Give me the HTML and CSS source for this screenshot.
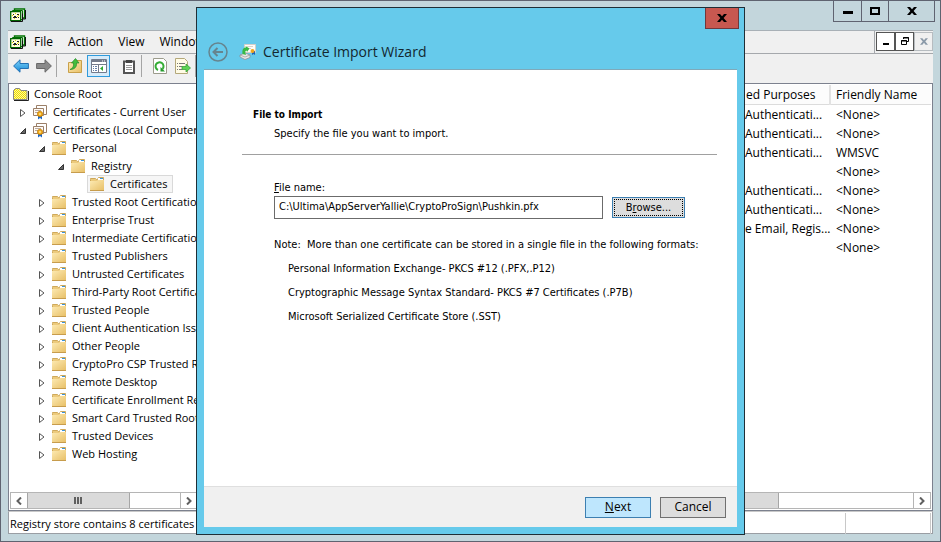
FILE: index.html
```html
<!DOCTYPE html>
<html lang="en">
<head>
<meta charset="utf-8">
<title>Certificate Import Wizard</title>
<link rel="stylesheet" href="styles.css">
</head>
<body>
<svg class="defs" aria-hidden="true">
  <defs>
    <linearGradient id="fold" x1="0" y1="0" x2="1" y2="1"><stop offset="0" stop-color="#fdebb4"/><stop offset="1" stop-color="#e8c068"/></linearGradient>
    <linearGradient id="blue" x1="0" y1="0" x2="0" y2="1"><stop offset="0" stop-color="#7cd0f8"/><stop offset="1" stop-color="#168ad8"/></linearGradient>
    <pattern id="hatch" width="2" height="2" patternUnits="userSpaceOnUse"><rect width="2" height="2" fill="#fff89a"/><rect width="1" height="1" fill="#eedd00"/><rect x="1" y="1" width="1" height="1" fill="#eedd00"/></pattern>
    <symbol id="folder" viewBox="0 0 16 14">
      <path d="M1.500 2.500V1.500h5l1 1h1l1-2h5v12h-13z" fill="#ecca7c" stroke="#cfa95a"/>
      <path d="M9 1h5v2H9z" fill="#fff"/><path d="M11 1h3v1h-3z" fill="#3b94d9"/>
      <path d="M1 4h7l1-1h6v10H1z" fill="url(#fold)"/>
      <path d="M1 13.500h14" stroke="#c79c4c"/>
    </symbol>
    <symbol id="cert" viewBox="0 0 16 16">
      <path d="M4.500 1.500h10v9h-10z" fill="#fff" stroke="#9b7f68"/>
      <path d="M1.500 4.500h10v7h-10z" fill="#fffaf4" stroke="#9b7f68"/>
      <path d="M3 6.500h6M3 8.500h3" stroke="#b9a9a0"/>
      <path d="M6 11v4.500l2-1.500 2 1.500V11z" fill="#1d68c9"/>
      <circle cx="8" cy="10" r="2.700" fill="#f0a818" stroke="#b87500" stroke-width=".6"/><circle cx="8" cy="10" r="1" fill="#ffe38a"/>
    </symbol>
    <symbol id="mmc" viewBox="0 0 16 14">
      <path d="M4.500 1h10v9h-10z" fill="#fff" stroke="#007000" stroke-width="1.400"/>
      <path d="M15.500 2v9h-3" fill="none" stroke="#111"/>
      <path d="M2.500 2.500h10v9h-10z" fill="#fff" stroke="#007000" stroke-width="1"/>
      <path d="M.7 3.700h10v9h-10z" fill="#fffde0" stroke="#006400" stroke-width="1.300"/>
      <path d="M3 6h1v1H3zm4 0h2v1H7zM3 9h1V8h2v1h1v1H3zm5 0h1v1H8z" fill="#222"/>
      <path d="M5 5h1v1H5zM2 7h1v1H2zM7 8h1v1H7zM8 7h1v1H8zM4 10h1v1H4z" fill="#e8d800"/>
      <path d="M1 13.500h11.500v-8" fill="none" stroke="#111"/>
    </symbol>
    <symbol id="closed" viewBox="0 0 8 10"><path d="M1.500 1.500v7L6 5z" fill="#fff" stroke="#555"/></symbol>
    <symbol id="open" viewBox="0 0 8 10"><path d="M6.500 2.500v5h-5z" fill="#666" stroke="#333"/></symbol>
    <symbol id="cross" viewBox="0 0 10 8"><path d="M0 0h3l2 2.300L7 0h3L6.600 4 10 8H7L5 5.700 3 8H0l3.400-4z" fill="currentColor"/></symbol>
    <symbol id="arrow" viewBox="0 0 16 14"><path d="M.6 7 7 .8v3.700h8.400v5H7v3.700z"/></symbol>
  </defs>
</svg>

<div class="window">
  <header class="titlebar">
    <svg class="i16"><use href="#mmc"/></svg>
    <div class="caption">
      <button aria-label="Minimize"><svg width="10" height="8"><path d="M0 4h10v3H0z"/></svg></button>
      <button aria-label="Maximize"><svg width="10" height="8"><path d="M1 1h8v6H1z" fill="none" stroke="#000" stroke-width="2"/></svg></button>
      <button class="wide" aria-label="Close"><svg width="10" height="8"><use href="#cross"/></svg></button>
    </div>
  </header>

  <main class="client">
    <nav class="menubar">
      <svg class="i16"><use href="#mmc"/></svg>
      <a href="#">File</a><a href="#">Action</a><a href="#">View</a><a href="#">Window</a>
      <div class="child-controls">
        <button aria-label="Minimize child"><svg width="8" height="8"><path d="M1 6h6v2H1z"/></svg></button>
        <button aria-label="Restore child"><svg width="8" height="8" fill="none" stroke="#000"><path d="M2.500 2V.5h5v4H6M2 1h6M.5 3.500h5v4h-5zM0 4h6"/></svg></button>
        <button class="off" aria-label="Close child" disabled><svg width="8" height="7"><use href="#cross"/></svg></button>
      </div>
    </nav>

    <div class="toolbar">
      <button aria-label="Back"><svg width="16" height="14" fill="url(#blue)" stroke="#2271b4"><use href="#arrow"/></svg></button>
      <button aria-label="Forward"><svg class="flip" width="16" height="14" fill="#8a8a8a" stroke="#686868"><use href="#arrow"/></svg></button>
      <i></i>
      <button aria-label="Up one level"><svg width="16" height="16"><path d="M1.500 4.500h6l1-2h6v12h-13z" fill="url(#fold)" stroke="#c9a04a"/><path d="M3 11.500C6 10.500 7 8 6.500 5H4.500l4-4.500L12 5H9.500c.5 4-2 6.500-6.500 6.500z" fill="#43bd3c" stroke="#23892a" stroke-width=".7"/></svg></button>
      <button class="on" aria-label="Show console tree"><svg width="16" height="14"><path d="M.5.5h15v13H.5z" fill="#fff" stroke="#737b8b"/><path d="M1 2h14" stroke="#737b8b" stroke-width="2"/><path d="M1 5.500h14M7.500 6v7" stroke="#737b8b"/><path d="M11 2h1m1 0h1" stroke="#fff"/><path d="M2 7.500h1m1 0h2M2 9.500h1m1 0h2M2 11.500h1m1 0h2" stroke="#6681a9"/><path d="M12 7v5L9 9.500z" fill="#30a832"/></svg></button>
      <button aria-label="Paste"><svg width="12" height="15"><path d="M1 2.500h10v11.500H1z" fill="#fff" stroke="#555" stroke-width="2"/><path d="M3 1h6v3H3z" fill="#444"/><path d="M3 6.500h6M3 8.500h6M3 10.500h6" stroke="#999"/></svg></button>
      <i></i>
      <button aria-label="Refresh"><svg width="14" height="16"><path d="M.5.500h10l3 3v12H.5z" fill="#fff" stroke="#9c9c8c"/><path d="M5 12A4 4 0 1 1 9.500 11" fill="none" stroke="#35ad35" stroke-width="2"/><path d="M7.500 9v4.500H12z" fill="#239a2b"/></svg></button>
      <button aria-label="Export list"><svg width="16" height="16"><path d="M.5.500h9l3 3v12H.5z" fill="#fffbe5" stroke="#b4a87a"/><path d="M2 5.500h1m1 0h6M2 8.500h1m1 0h3M2 11.500h1m1 0h3" stroke="#777"/><path d="M7 8.500h4V6l4.500 4L11 14v-2.500H7z" fill="#5ed354" stroke="#2a9b2d" stroke-width=".7"/></svg></button>
      <i></i>
    </div>

    <div class="panes">
      <section class="tree-pane">
        <ul class="tree">
          <li class="root"><svg class="i16" viewBox="0 0 16 14"><path d="M.5 3.500l2-2h4l1.500 2h6v9H.5z" fill="url(#hatch)" stroke="#888"/><path d="M1 13.500h14.500V4" fill="none" stroke="#222"/></svg><span>Console Root</span></li>
          <li class="l1"><svg class="tw"><use href="#closed"/></svg><svg class="i16"><use href="#cert"/></svg><span>Certificates - Current User</span></li>
          <li class="l1"><svg class="tw"><use href="#open"/></svg><svg class="i16"><use href="#cert"/></svg><span>Certificates (Local Computer)</span></li>
          <li class="l2"><svg class="tw"><use href="#open"/></svg><svg class="i16"><use href="#folder"/></svg><span>Personal</span></li>
          <li class="l3"><svg class="tw"><use href="#open"/></svg><svg class="i16"><use href="#folder"/></svg><span>Registry</span></li>
          <li class="l4"><div class="selected"><svg class="i16"><use href="#folder"/></svg><span>Certificates</span></div></li>
          <li class="l2"><svg class="tw"><use href="#closed"/></svg><svg class="i16"><use href="#folder"/></svg><span>Trusted Root Certification Authorities</span></li>
          <li class="l2"><svg class="tw"><use href="#closed"/></svg><svg class="i16"><use href="#folder"/></svg><span>Enterprise Trust</span></li>
          <li class="l2"><svg class="tw"><use href="#closed"/></svg><svg class="i16"><use href="#folder"/></svg><span>Intermediate Certification Authorities</span></li>
          <li class="l2"><svg class="tw"><use href="#closed"/></svg><svg class="i16"><use href="#folder"/></svg><span>Trusted Publishers</span></li>
          <li class="l2"><svg class="tw"><use href="#closed"/></svg><svg class="i16"><use href="#folder"/></svg><span>Untrusted Certificates</span></li>
          <li class="l2"><svg class="tw"><use href="#closed"/></svg><svg class="i16"><use href="#folder"/></svg><span>Third-Party Root Certification Authorities</span></li>
          <li class="l2"><svg class="tw"><use href="#closed"/></svg><svg class="i16"><use href="#folder"/></svg><span>Trusted People</span></li>
          <li class="l2"><svg class="tw"><use href="#closed"/></svg><svg class="i16"><use href="#folder"/></svg><span>Client Authentication Issuers</span></li>
          <li class="l2"><svg class="tw"><use href="#closed"/></svg><svg class="i16"><use href="#folder"/></svg><span>Other People</span></li>
          <li class="l2"><svg class="tw"><use href="#closed"/></svg><svg class="i16"><use href="#folder"/></svg><span>CryptoPro CSP Trusted Roots</span></li>
          <li class="l2"><svg class="tw"><use href="#closed"/></svg><svg class="i16"><use href="#folder"/></svg><span>Remote Desktop</span></li>
          <li class="l2"><svg class="tw"><use href="#closed"/></svg><svg class="i16"><use href="#folder"/></svg><span>Certificate Enrollment Requests</span></li>
          <li class="l2"><svg class="tw"><use href="#closed"/></svg><svg class="i16"><use href="#folder"/></svg><span>Smart Card Trusted Roots</span></li>
          <li class="l2"><svg class="tw"><use href="#closed"/></svg><svg class="i16"><use href="#folder"/></svg><span>Trusted Devices</span></li>
          <li class="l2"><svg class="tw"><use href="#closed"/></svg><svg class="i16"><use href="#folder"/></svg><span>Web Hosting</span></li>
        </ul>
        <div class="scroll">
          <button aria-label="Scroll left"><svg width="6" height="8"><path d="M5 .5 1.500 4 5 7.500"/></svg></button>
          <div class="track"><div class="thumb"><b></b><b></b><b></b></div></div>
          <button aria-label="Scroll right"><svg width="6" height="8"><path d="M1 .5 4.500 4 1 7.500"/></svg></button>
        </div>
      </section>
      <section class="list-pane">
        <table>
          <colgroup><col><col class="c-purpose"><col class="c-name"></colgroup>
          <thead><tr><th></th><th>ed Purposes</th><th>Friendly Name</th></tr></thead>
          <tbody>
            <tr><td></td><td>Authenticati...</td><td>&lt;None&gt;</td></tr>
            <tr><td></td><td>Authenticati...</td><td>&lt;None&gt;</td></tr>
            <tr><td></td><td>Authenticati...</td><td>WMSVC</td></tr>
            <tr><td></td><td></td><td>&lt;None&gt;</td></tr>
            <tr><td></td><td>Authenticati...</td><td>&lt;None&gt;</td></tr>
            <tr><td></td><td>Authenticati...</td><td>&lt;None&gt;</td></tr>
            <tr><td></td><td>e Email, Regis...</td><td>&lt;None&gt;</td></tr>
            <tr><td></td><td></td><td>&lt;None&gt;</td></tr>
          </tbody>
        </table>
        <div class="scroll">
          <div class="track"><div class="thumb long"></div></div>
          <button aria-label="Scroll list right"><svg width="6" height="8"><path d="M1 .5 4.500 4 1 7.500"/></svg></button>
        </div>
      </section>
    </div>

    <footer class="status"><span>Registry store contains 8 certificates</span><i></i><i></i></footer>
  </main>
</div>

<div class="overlay">
  <form class="dialog">
    <header class="dialog-head">
      <button type="button" class="close" aria-label="Close wizard"><svg width="10" height="8"><use href="#cross"/></svg></button>
      <div class="dialog-title">
        <button type="button" class="back" aria-label="Previous page"><svg width="20" height="20" fill="none" stroke="#66858f" stroke-width="2"><circle cx="10" cy="10" r="9" stroke-width="1.500"/><path d="M5.500 10H15M9.500 6l-4 4 4 4"/></svg></button>
        <svg width="18" height="18"><path d="M5.500 1.500h11v8h-11z" fill="#fffdf8" stroke="#d5cfc9"/><path d="M8 3.500h6M9 5.500h3" stroke="#d8d2cc"/><path d="M13 8v4l1.500-1 1.500 1V8z" fill="#1c62bc"/><circle cx="13.500" cy="8" r="2" fill="#f2a71b"/><path d="M1 12l5-2 5 2v2.500L6 16.500 1 14z" fill="#e8e8e8" stroke="#8c8c8c" stroke-width=".7"/><path d="M1 12l5 2 5-2" fill="none" stroke="#999" stroke-width=".7"/><path d="M3.500 11C3 7 4 4.500 7 4.500L6.500 3l4 2.500L8 9 7.500 7.500C6 8 6 9.500 7 12z" fill="#38ba45"/></svg>
        <h1>Certificate Import Wizard</h1>
      </div>
    </header>
    <div class="page">
      <h2>File to Import</h2>
      <p class="sub">Specify the file you want to import.</p>
      <hr>
      <div class="fields">
        <label for="file"><u>F</u>ile name:</label>
        <div class="row"><input id="file" type="text" value="C:\Ultima\AppServerYallie\CryptoProSign\Pushkin.pfx"><button type="button" class="btn browse"><span>B<u>r</u>owse...</span></button></div>
        <p class="note">Note:&nbsp; More than one certificate can be stored in a single file in the following formats:</p>
        <ul>
          <li>Personal Information Exchange- PKCS #12 (.PFX,.P12)</li>
          <li>Cryptographic Message Syntax Standard- PKCS #7 Certificates (.P7B)</li>
          <li>Microsoft Serialized Certificate Store (.SST)</li>
        </ul>
      </div>
    </div>
    <footer class="actions">
      <button type="submit" class="btn next"><span><u>N</u>ext</span></button>
      <button type="button" class="btn">Cancel</button>
    </footer>
  </form>
</div>
</body>
</html>
```
FILE: styles.css
```css
* { box-sizing: border-box; }
html, body { height: 100%; }
body { margin: 0; overflow: hidden; font: 12px/18px "Open Sans", "Noto Sans", sans-serif; color: #000; }
button, input { font: inherit; color: inherit; margin: 0; padding: 0; border-radius: 0; }
button { display: flex; align-items: center; justify-content: center; border: 0; background: none; }
svg { display: block; flex: none; }
ul { list-style: none; margin: 0; padding: 0; }
p, h1, h2 { margin: 0; }
.defs { position: absolute; width: 0; height: 0; }
.i16 { width: 16px; height: 14px; }

.window { height: 100%; display: flex; flex-direction: column; background: #c3d6dc; border: 1px solid #5f6370; padding: 0 7px 7px; }
.titlebar { display: flex; justify-content: space-between; height: 29px; flex: none; }
.titlebar > svg { margin: 7px 0 0 2px; }
.caption { display: flex; height: 21px; border: 1px solid #5f6370; border-top: 0; margin-right: -2px; }
.caption button { width: 27px; }
.caption button + button { border-left: 1px solid #5f6370; }
.caption .wide { width: 46px; }

.client { flex: 1; min-height: 0; display: flex; flex-direction: column; background: #f0f0f0; border-top: 1px solid #a8b0b6; }
.menubar { display: flex; align-items: center; height: 23px; flex: none; border-bottom: 1px solid #a5a8ac; padding-left: 2px; gap: 15px; }
.menubar a { color: inherit; text-decoration: none; }
.menubar svg + a { margin-left: -7px; }
.child-controls { display: flex; margin-left: auto; height: 23px; padding: 1px 0 3px 1px; border-left: 1px solid #a5a8ac; }
.child-controls button { width: 19px; border: 1px solid #555; background: #fff; }
.child-controls .off { border-color: #b7bcc0; background: #f0f0f0; color: #8a99a8; }

.toolbar { display: flex; align-items: flex-start; height: 29px; flex: none; padding: 1px 0 0 1px; }
.toolbar button { width: 23px; height: 22px; }
.toolbar i { width: 1px; height: 22px; margin: 0 6px 0 1px; background: #a5a5a5; }
.toolbar .on { margin: 0 7px 0 1px; background: #d6ebfa; border: 1px solid #2f9bdc; }
.flip { transform: scaleX(-1); }

.panes { flex: 1; min-height: 0; display: flex; gap: 4px; }
.tree-pane, .list-pane { display: flex; flex-direction: column; min-width: 0; background: #fff; border: 1px solid #7c818e; }
.tree-pane { width: 192px; flex: none; padding: 1px; font-size: 11px; }
.list-pane { flex: 1; padding: 1px; }
.tree { flex: 1; overflow: hidden; }
.tree li { display: flex; align-items: center; height: 18px; white-space: nowrap; }
.tree .i16 { margin-right: 5px; }
.tw { width: 8px; height: 10px; margin: 2px 5px 0 1px; }
.root { padding-left: 3px; }
.l1 { padding-left: 8px; }
.l1 .i16 { height: 16px; }
.l2 { padding-left: 27px; }
.l3 { padding-left: 46px; }
.l4 { padding-left: 77px; }
.selected { display: flex; align-items: center; height: 18px; padding: 0 4px 0 1px; border: 1px solid #d9d9d9; background: #f6f6f6; }

.scroll { display: flex; height: 17px; flex: none; border: 1px solid #b5b5b5; }
.scroll button { width: 16px; }
.scroll svg { fill: none; stroke: #606060; stroke-width: 2; }
.track { flex: 1; display: flex; border-right: 1px solid #b5b5b5; }
.thumb { display: flex; align-items: center; justify-content: center; gap: 1px; width: 67%; border: 1px solid #a6a6a6; border-width: 0 1px; background: #dadada; }
.thumb b { width: 2px; height: 7px; background: #606060; }
.thumb.long { width: 81%; }

table { width: 100%; border-collapse: collapse; table-layout: fixed; white-space: nowrap; }
.c-purpose { width: 124px; }
.c-name { width: 101px; }
thead { background: #fcfcfc; }
th, td { text-align: left; font-weight: 400; padding: 1px 0 0 6px; height: 19px; line-height: 18px; }
th { border-right: 2px solid #e2e2e2; border-bottom: 1px solid #dcdcdc; padding-left: 5px; }
th:last-child { border-right: 0; }
th:nth-child(2), td:nth-child(2) { padding-left: 39px; }
.list-pane .scroll { margin-top: auto; }

.status { display: flex; align-items: center; height: 23px; flex: none; background: #fff; border: 1px solid #9a9ea4; border-top-color: #c8c8c8; padding: 2px 0 0 1px; font-size: 11px; }
.status span { margin-right: auto; }
.status i { width: 1px; height: 21px; background: #c8c8c8; margin-right: 84px; }
.status i:last-child { margin-right: 1px; }

.overlay { position: absolute; inset: 7px 0; display: flex; justify-content: center; }
.dialog { width: 549px; display: flex; flex-direction: column; background: #66caeb; border: 1px solid #1f2e36; padding: 0 7px 7px; font: 11px/14px "DejaVu Sans Condensed", "DejaVu Sans", sans-serif; }
.dialog-head { height: 62px; flex: none; border-bottom: 1px solid #7fa9b9; }
.close { width: 34px; height: 21px; margin: 0 -2px 0 auto; background: #c75850; border: 1px solid #70383c; border-top: 0; }
.dialog-title { display: flex; align-items: center; height: 24px; margin: 11px 0 0 4px; }
.back { margin-right: 11px; }
.dialog-title h1 { margin-left: 6px; font: 14px/24px "Open Sans", "Noto Sans", sans-serif; color: #13272f; }
.page { flex: 1; background: #fff; padding: 38px 20px 0 38px; }
.page h2 { font-size: 10px; line-height: 14px; padding-left: 11px; }
.sub { padding: 5px 0 0 32px; }
hr { margin: 13px 0 26px; border: 0; border-top: 1px solid #a0a0a0; }
.fields { padding: 0 32px; }
.fields label { display: block; margin-bottom: 1px; }
.row { display: flex; align-items: center; gap: 9px; margin-bottom: 19px; }
.row input { flex: 1; min-width: 0; height: 23px; padding: 0 4px 2px; border: 1px solid #6b6b6b; background: #fff; }
.note { white-space: nowrap; }
.fields li { margin: 10px 0 0 14px; }
.btn { width: 66px; height: 21px; background: #ddd; border: 1px solid #707070; font-family: "Open Sans", "Noto Sans", sans-serif; font-size: 12px; }
.browse { width: 73px; border-color: #3c7fb1; font: inherit; outline: 1px dotted #000; outline-offset: -3px; }
.next { background: #bee6fd; border-color: #3c7fb1; }
.actions { display: flex; align-items: center; justify-content: flex-end; gap: 9px; height: 41px; flex: none; padding: 0 11px 0 0; background: #f0f0f0; border-top: 1px solid #dfdfdf; }
```
